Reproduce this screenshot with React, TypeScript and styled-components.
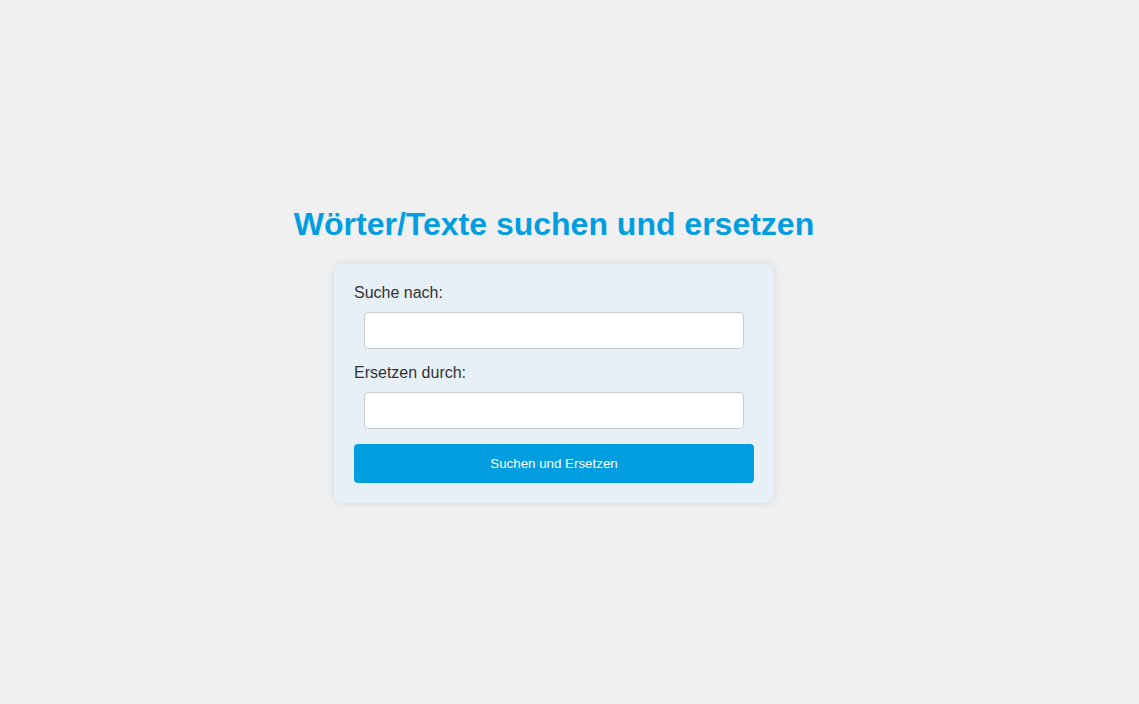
import { FC, useState, ChangeEvent } from "react";
import styled, { createGlobalStyle } from "styled-components";

const GlobalStyle = createGlobalStyle`
    body {
        margin: 0;
        background: #f0f0f0;
        font-family: "Liberation Sans", Arial, sans-serif;
        color: #333;
    }
`;

const App: FC = () => {
    const [search, setSearch] = useState<string>("");
    const [replace, setReplace] = useState<string>("");

    const onChangeSearch = (e: ChangeEvent<HTMLInputElement>) => setSearch(e.target.value);
    const onChangeReplace = (e: ChangeEvent<HTMLInputElement>) => setReplace(e.target.value);

    return (
        <>
            <GlobalStyle />
            <SPage>
                <STitle>Wörter/Texte suchen und ersetzen</STitle>
                <SCard>
                    <SGroup>
                        <SLabel htmlFor="search">Suche nach:</SLabel>
                        <SInput id="search" type="text" value={search} onChange={onChangeSearch} />
                    </SGroup>
                    <SGroup>
                        <SLabel htmlFor="replace">Ersetzen durch:</SLabel>
                        <SInput id="replace" type="text" value={replace} onChange={onChangeReplace} />
                    </SGroup>
                    <SButton type="button">Suchen und Ersetzen</SButton>
                </SCard>
            </SPage>
        </>
    );
};

export default App;

const SPage = styled.div`
    min-height: 100vh;
    display: flex;
    flex-direction: column;
    align-items: center;
    justify-content: center;
    padding-right: 31px;
    padding-top: 4px;
    box-sizing: border-box;
`;

const STitle = styled.h1`
    margin: 0 0 21px;
    font-size: 32px;
    font-weight: bold;
    color: #009ee0;
`;

const SCard = styled.div`
    width: 400px;
    padding: 20px;
    background: #e8f0f7;
    border-radius: 8px;
    box-shadow: 0 0 8px rgba(0, 0, 0, 0.1);
`;

const SGroup = styled.div`
    margin-bottom: 15px;
`;

const SLabel = styled.label`
    display: block;
    font-size: 16px;
    line-height: 18px;
    margin-bottom: 10px;
    color: #333;
`;

const SInput = styled.input`
    display: block;
    box-sizing: border-box;
    width: calc(100% - 20px);
    height: 37px;
    margin: 0 10px;
    padding: 8px 10px;
    font-size: 16px;
    font-family: inherit;
    background: #fff;
    border: 1px solid #ccc;
    border-radius: 4px;
    outline: none;
`;

const SButton = styled.button`
    display: block;
    width: 100%;
    height: 39px;
    padding: 0;
    border: none;
    border-radius: 4px;
    background: #009ee0;
    color: #fff;
    font-family: inherit;
    font-size: 13.33px;
    cursor: pointer;
`;
